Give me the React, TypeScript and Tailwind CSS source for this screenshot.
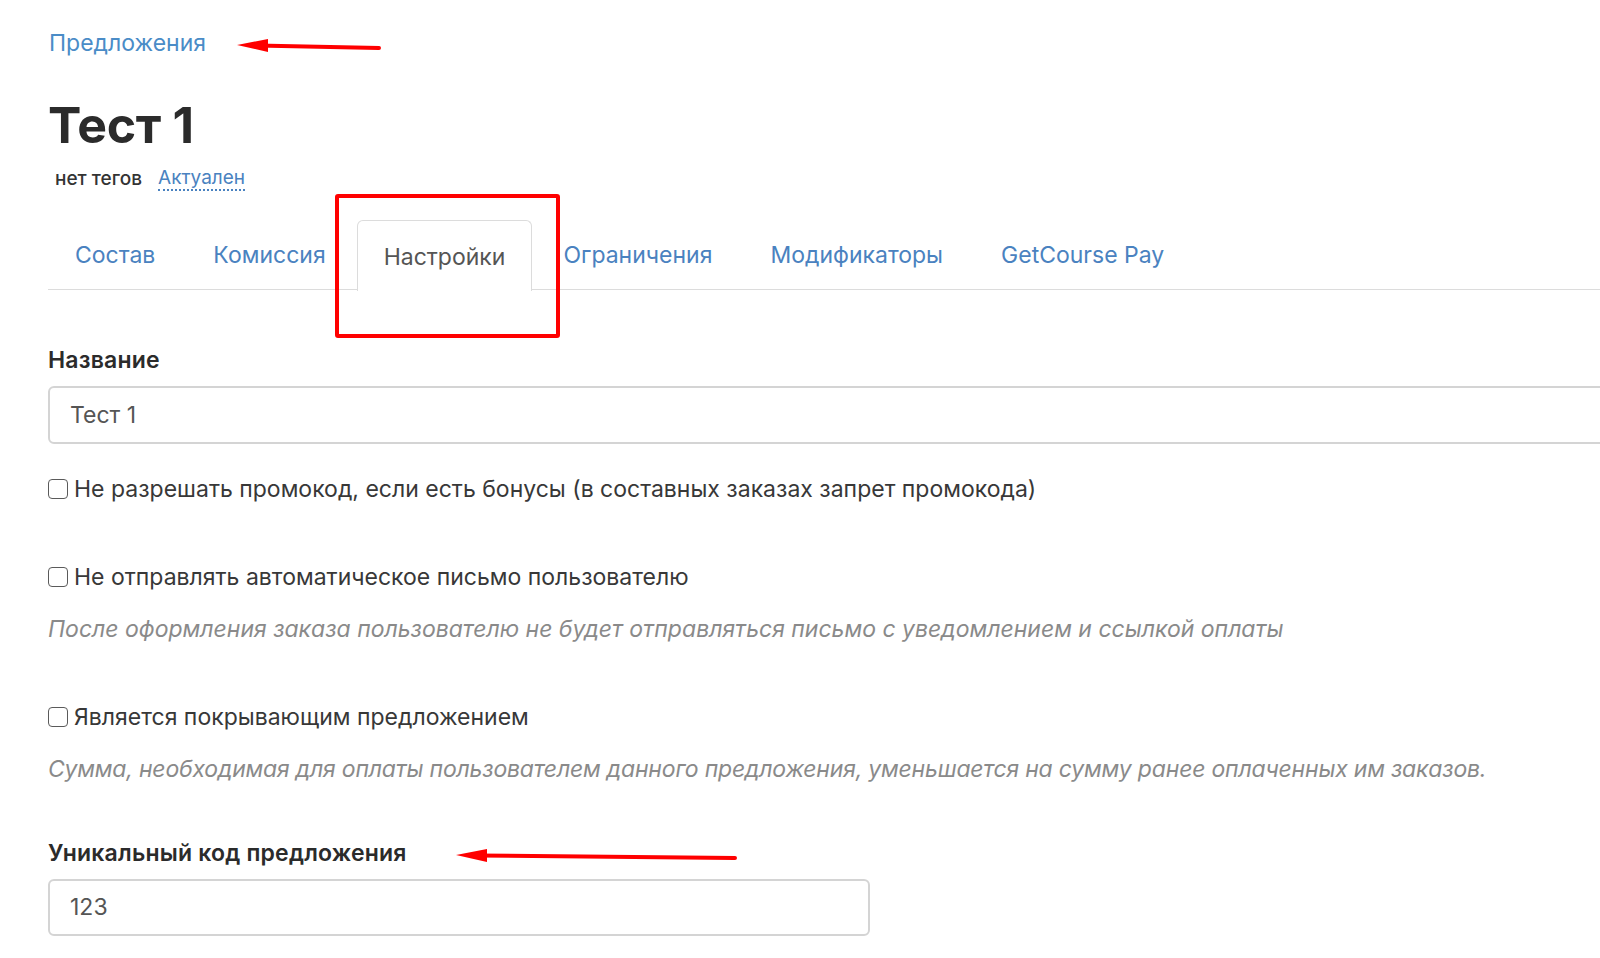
import React from "react";

const font = { fontFamily: "Inter, 'Noto Sans', 'Liberation Sans', sans-serif" };

function Checkbox() {
  return (
    <span className="inline-block w-[20px] h-[20px] shrink-0 rounded-[4px] border-[1.5px] border-[#5a5a5a] bg-white" />
  );
}

function Arrow({ x1, y1, x2, y2 }: { x1: number; y1: number; x2: number; y2: number }) {
  return (
    <svg className="absolute left-0 top-0 pointer-events-none" width="1600" height="958">
      <line x1={x1 + 20} y1={y1 + 0.5} x2={x2} y2={y2} stroke="#ff0000" strokeWidth="4" strokeLinecap="round" />
      <polygon points={`${x1},${y1} ${x1 + 31},${y1 - 6} ${x1 + 31},${y1 + 7}`} fill="#ff0000" />
    </svg>
  );
}

export default function App() {
  const tabs = ["Состав", "Комиссия", "Настройки", "Ограничения", "Модификаторы", "GetCourse Pay"];
  return (
    <div className="relative w-[1600px] h-[958px] overflow-hidden bg-white text-[#383838]" style={font}>
      <div className="pl-[48px] pt-[28px]">
        <div className="text-[23px] leading-[30px] text-[#4a8cc7] ml-[1px]">Предложения</div>
        <h1 className="mt-[37px] text-[50px] leading-[60px] font-bold text-[#2b2b2b] tracking-[-0.3px]">Тест 1</h1>
        <div className="mt-[12px] flex items-center gap-[16px] pl-[7px] text-[19px] leading-[24px]">
          <span className="text-[#333] font-medium">нет тегов</span>
          <span className="text-[#4a82c0] border-b-2 border-dotted border-[#4a82c0] leading-[22px]">Актуален</span>
        </div>
        <div className="mt-[28px] flex items-end border-b-[1.5px] border-[#dcdcdc] h-[71px]">
          {tabs.map((t) => {
            const active = t === "Настройки";
            return (
              <div
                key={t}
                className={
                  active
                    ? "mr-[4px] px-[26px] h-[71px] -mb-[1.5px] flex items-center pt-[3px] bg-white border-[1.5px] border-b-0 border-[#dcdcdc] rounded-t-[6px] text-[23px] text-[#555]"
                    : "mr-[4px] px-[27px] h-[71px] flex items-center pt-[3px] text-[23px] text-[#4a82c0]"
                }
              >
                {t}
              </div>
            );
          })}
        </div>
        <div className="mt-[58px] text-[23px] leading-[24px] font-semibold text-[#2b2b2b] tracking-[0.2px]">Название</div>
        <div className="mt-[14px] w-[1600px] h-[58px] rounded-[6px] border-2 border-[#d4d4d4] flex items-center pl-[20px] text-[23px] text-[#555]">
          Тест 1
        </div>
        <div className="mt-[32px] flex items-center gap-[6px] text-[23px] leading-[26px]">
          <Checkbox />
          <span>Не разрешать промокод, если есть бонусы (в составных заказах запрет промокода)</span>
        </div>
        <div className="mt-[62px] flex items-center gap-[6px] text-[23px] leading-[26px]">
          <Checkbox />
          <span>Не отправлять автоматическое письмо пользователю</span>
        </div>
        <div className="mt-[26px] text-[23px] leading-[26px] italic text-[#8a8a8a]">
          После оформления заказа пользователю не будет отправляться письмо с уведомлением и ссылкой оплаты
        </div>
        <div className="mt-[62px] flex items-center gap-[6px] text-[23px] leading-[26px]">
          <Checkbox />
          <span>Является покрывающим предложением</span>
        </div>
        <div className="mt-[26px] text-[23px] leading-[26px] italic text-[#8a8a8a] tracking-[-0.2px]">
          Сумма, необходимая для оплаты пользователем данного предложения, уменьшается на сумму ранее оплаченных им заказов.
        </div>
        <div className="mt-[59px] text-[23px] leading-[24px] font-semibold text-[#2b2b2b] tracking-[0.2px]">Уникальный код предложения</div>
        <div className="mt-[14px] w-[822px] h-[57px] rounded-[6px] border-2 border-[#d4d4d4] flex items-center pl-[20px] text-[23px] text-[#555]">
          123
        </div>
      </div>

      <div className="absolute left-[335px] top-[194px] w-[225px] h-[144px] border-[4px] border-[#ff0000] rounded-[3px] pointer-events-none" />
      <Arrow x1={237} y1={45} x2={379} y2={48} />
      <Arrow x1={456} y1={855} x2={735} y2={858} />
    </div>
  );
}
